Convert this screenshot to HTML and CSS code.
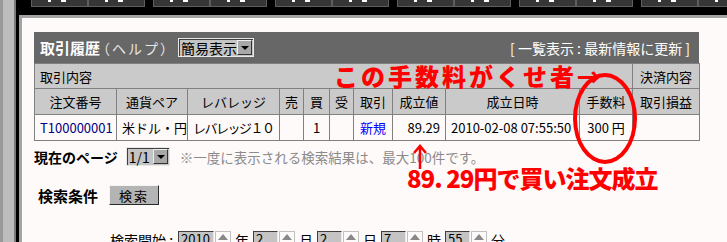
FILE: index.html
```html
<!DOCTYPE html>
<html lang="ja">
<head>
    <meta charset="UTF-8">
    <title>取引履歴</title>
    <link rel="stylesheet" href="styles.css">
</head>
<body>
    <div class="shell">
        <div class="rail"></div>
        <div class="main">
            <div class="tabs">
                <div class="tab-pair">
                    <span class="tab"><i></i><i class="wide"></i></span>
                    <span class="tab"><i></i><i class="wide"></i></span>
                </div>
                <div class="tab-pair">
                    <span class="tab"><i></i><i class="wide"></i></span>
                    <span class="tab"><i></i><i class="wide"></i></span>
                </div>
                <div class="tab-pair">
                    <span class="tab"><i></i><i class="wide"></i></span>
                    <span class="tab"><i></i><i class="wide"></i></span>
                </div>
                <div class="tab-pair">
                    <span class="tab"><i></i><i class="wide"></i></span>
                    <span class="tab"><i></i><i class="wide"></i></span>
                </div>
                <div class="tab-pair">
                    <span class="tab"><i></i><i class="wide"></i></span>
                    <span class="tab"><i></i><i class="wide"></i></span>
                </div>
                <div class="tab-pair">
                    <span class="tab"><i></i><i class="wide"></i></span>
                    <span class="tab"><i></i><i class="wide"></i></span>
                </div>
            </div>

            <div class="page">
                <div class="page-inner">
                    <div class="panel">
                        <div class="panel-head">
                            <span class="title">取引履歴</span>
                            <span class="help">（ヘルプ）</span>
                            <span class="select select-view">簡易表示<b class="drop"></b></span>
                            <span class="head-link">[ 一覧表示 : 最新情報に更新 ]</span>
                        </div>
                        <table class="trades">
                            <colgroup>
                                <col style="width:82px"><col style="width:71px"><col style="width:92px">
                                <col style="width:24px"><col style="width:26px"><col style="width:24px">
                                <col style="width:39px"><col style="width:53px"><col style="width:134px">
                                <col style="width:53px"><col style="width:67px">
                            </colgroup>
                            <tr class="group-row">
                                <td colspan="10" class="left">取引内容</td>
                                <td>決済内容</td>
                            </tr>
                            <tr class="head-row">
                                <th>注文番号</th>
                                <th>通貨ペア</th>
                                <th>レバレッジ</th>
                                <th>売</th>
                                <th>買</th>
                                <th>受</th>
                                <th>取引</th>
                                <th>成立値</th>
                                <th>成立日時</th>
                                <th>手数料</th>
                                <th>取引損益</th>
                            </tr>
                            <tr class="data-row">
                                <td class="left order-no">T100000001</td>
                                <td>米ドル・円</td>
                                <td class="left lev">レバレッジ１０</td>
                                <td></td>
                                <td>1</td>
                                <td></td>
                                <td class="kind">新規</td>
                                <td class="right">89.29</td>
                                <td class="left">2010-02-08 07:55:50</td>
                                <td>300 円</td>
                                <td></td>
                            </tr>
                        </table>
                    </div>

                    <div class="pager">
                        <span class="pager-label">現在のページ</span>
                        <span class="select select-page">1/1<b class="drop"></b></span>
                        <span class="note">※一度に表示される検索結果は、最大100件です。</span>
                    </div>

                    <div class="search">
                        <span class="search-label">検索条件</span>
                        <span class="btn">検索</span>
                    </div>

                    <div class="range">
                        <span class="range-label">検索開始 :</span>
                        <span class="field f-year">2010</span><span class="spin"></span><span class="unit">年</span>
                        <span class="field">2</span><span class="spin"></span><span class="unit">月</span>
                        <span class="field">2</span><span class="spin"></span><span class="unit">日</span>
                        <span class="field">7</span><span class="spin"></span><span class="unit">時</span>
                        <span class="field">55</span><span class="spin"></span><span class="unit">分</span>
                    </div>

                    <!-- annotations drawn over the screenshot -->
                    <div class="memo memo-fee">この手数料がくせ者→</div>
                    <div class="ring"></div>
                    <svg class="up-arrow" width="16" height="26" viewBox="0 0 16 26">
                        <path d="M8 25 V3 M2 9 L8 2 L14 9" fill="none" stroke="#ff0000" stroke-width="2.5"/>
                    </svg>
                    <div class="memo memo-buy">89. 29円で買い注文成立</div>
                </div>
            </div>
        </div>
    </div>
</body>
</html>
```

FILE: styles.css
```css
body {
    margin: 0;
    font-family: "Noto Sans CJK JP", sans-serif;
    font-size: 13px;
    color: #000;
}
.shell {
    display: flex;
    height: 242px;
    overflow: hidden;
}
.rail {
    width: 16px;
    flex-shrink: 0;
    box-sizing: border-box;
    background-color: #bdbdbd;
    border-left: 3px solid #999;
    border-right: 2px solid #7a7a7a;
}
.main {
    flex: 1;
    min-width: 0;
    background-color: #000;
    padding-left: 3px;
    display: flex;
    flex-direction: column;
}
.tabs {
    height: 15px;
    flex-shrink: 0;
    display: flex;
    gap: 8px;
    padding-left: 12px;
    overflow: hidden;
}
.tab-pair {
    display: flex;
    flex-shrink: 0;
}
.tab {
    width: 57px;
    height: 7px;
    box-sizing: border-box;
    background-color: #363636;
    border: 1px solid #5e5e5e;
    border-top: none;
    display: flex;
    justify-content: center;
    gap: 10px;
    padding-right: 6px;
}
.tab i {
    display: block;
    width: 3px;
    height: 2px;
    background-color: #fff;
}
.tab i.wide {
    width: 5px;
}
.page {
    flex: 1;
    min-height: 0;
    background-color: #fffafa;
    border-top: 3px solid #a3a3a3;
    border-left: 3px solid #a3a3a3;
}
.page-inner {
    position: relative;
    height: 100%;
    box-sizing: border-box;
    border-top: 1px solid #fff;
    border-left: 1px solid #fff;
    padding: 13px 0 0 11px;
}
.panel {
    width: 665px;
}
.panel-head {
    height: 31px;
    background-color: #676767;
    color: #fff;
    display: flex;
    align-items: center;
    padding: 0 9px 0 6px;
}
.title {
    font-size: 15px;
    font-weight: bold;
}
.help {
    font-size: 14px;
    color: #e6e6e6;
    letter-spacing: 2px;
    margin-left: -4px;
}
.select {
    display: flex;
    align-items: center;
    height: 19px;
    box-sizing: border-box;
    background-color: #c4c4c4;
    color: #000;
    border: 1px solid #e8e8e8;
    box-shadow: inset 1px 1px 0 #404040;
    padding-left: 2px;
    font-size: 14px;
}
.select-view {
    width: 76px;
    margin-left: 2px;
}
.drop {
    width: 15px;
    height: 15px;
    margin-left: auto;
    margin-right: 1px;
    box-sizing: border-box;
    background-color: #a8a8a8;
    border: 1px solid;
    border-color: #eee #333 #333 #eee;
    position: relative;
}
.drop::after {
    content: "";
    position: absolute;
    left: 3px;
    top: 5px;
    border-left: 4px solid transparent;
    border-right: 4px solid transparent;
    border-top: 4px solid #000;
}
.head-link {
    margin-left: auto;
    font-size: 14px;
}
.trades {
    width: 665px;
    table-layout: fixed;
    border-collapse: collapse;
}
.trades td, .trades th {
    border: 1px solid #808080;
    padding: 0 5px;
    text-align: center;
    font-weight: normal;
    white-space: nowrap;
    overflow: hidden;
}
.group-row {
    height: 25px;
    background-color: #cacaca;
}
.head-row {
    height: 26px;
    background-color: #cacaca;
}
.data-row {
    height: 26px;
}
.trades .left {
    text-align: left;
}
.trades .right {
    text-align: right;
}
.trades .lev {
    letter-spacing: -1.5px;
}
.order-no {
    color: #000080;
}
.kind {
    color: #0000ff;
}
.pager {
    display: flex;
    align-items: center;
    height: 19px;
    margin-top: 6px;
}
.pager-label {
    font-size: 14px;
    font-weight: bold;
}
.select-page {
    width: 44px;
    margin-left: 8px;
}
.note {
    margin-left: 10px;
    color: #8a8a8a;
    font-size: 13.5px;
}
.search {
    display: flex;
    align-items: center;
    height: 20px;
    margin-top: 19px;
    padding-left: 4px;
}
.search-label {
    font-size: 15px;
    font-weight: bold;
}
.btn {
    width: 50px;
    height: 20px;
    margin-left: 11px;
    box-sizing: border-box;
    display: flex;
    align-items: center;
    justify-content: center;
    background-color: #b4b4b4;
    border: 1px solid;
    border-color: #f4f4f4 #2a2a2a #2a2a2a #f4f4f4;
    letter-spacing: 2px;
}
.range {
    display: flex;
    align-items: flex-start;
    margin-top: 26px;
    padding-left: 76px;
}
.range-label {
    width: 68px;
    font-size: 14px;
    line-height: 18px;
}
.field {
    width: 25px;
    height: 16px;
    box-sizing: border-box;
    background-color: #c4c4c4;
    border: 1px solid;
    border-color: #404040 #e8e8e8 #e8e8e8 #404040;
    line-height: 14px;
    padding-left: 2px;
}
.f-year {
    width: 36px;
}
.spin {
    width: 16px;
    height: 14px;
    margin-left: 1px;
    box-sizing: border-box;
    background-color: #fffafa;
    border: 1px solid #c0c0c0;
    position: relative;
}
.spin::after {
    content: "";
    position: absolute;
    left: 2px;
    top: 2px;
    border-left: 5px solid transparent;
    border-right: 5px solid transparent;
    border-bottom: 6px solid #888;
}
.unit {
    width: 22px;
    text-align: center;
    font-size: 14px;
    line-height: 18px;
}
.memo {
    position: absolute;
    color: #ff0000;
    font-size: 24px;
    font-weight: 900;
    white-space: nowrap;
    line-height: 1;
}
.memo-fee {
    left: 311px;
    top: 45px;
    letter-spacing: 3px;
}
.memo-buy {
    left: 384px;
    top: 147px;
    letter-spacing: -1px;
}
.ring {
    position: absolute;
    left: 550px;
    top: 54px;
    width: 64px;
    height: 91px;
    box-sizing: border-box;
    border: 4px solid #ff0000;
    border-radius: 50%;
}
.up-arrow {
    position: absolute;
    left: 389px;
    top: 125px;
}
```
